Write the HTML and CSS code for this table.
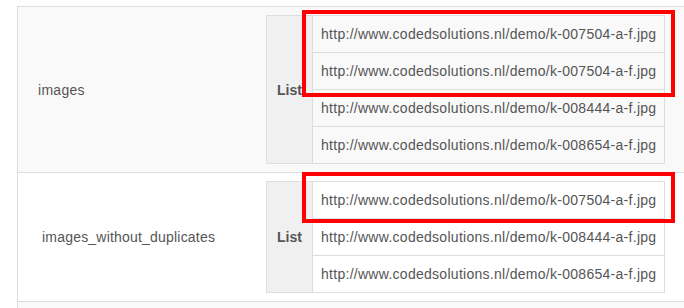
FILE: index.html
```html
<!DOCTYPE html>
<html>
<head>
<meta charset="utf-8">
<link rel="stylesheet" href="styles.css">
</head>
<body>
<div class="page">
  <div class="outer">
    <div class="row striped">
      <div class="key key-a">images</div>
      <div class="val">
        <table class="inner">
          <tr><th rowspan="4">List</th><td>http://www.codedsolutions.nl/demo/k-007504-a-f.jpg</td></tr>
          <tr><td>http://www.codedsolutions.nl/demo/k-007504-a-f.jpg</td></tr>
          <tr><td>http://www.codedsolutions.nl/demo/k-008444-a-f.jpg</td></tr>
          <tr><td>http://www.codedsolutions.nl/demo/k-008654-a-f.jpg</td></tr>
        </table>
      </div>
    </div>
    <div class="row plain">
      <div class="key key-b">images_without_duplicates</div>
      <div class="val">
        <table class="inner">
          <tr><th rowspan="3">List</th><td>http://www.codedsolutions.nl/demo/k-007504-a-f.jpg</td></tr>
          <tr><td>http://www.codedsolutions.nl/demo/k-008444-a-f.jpg</td></tr>
          <tr><td>http://www.codedsolutions.nl/demo/k-008654-a-f.jpg</td></tr>
        </table>
      </div>
    </div>
    <div class="row striped tail"></div>
  </div>
  <div class="mark mark-1"></div>
  <div class="mark mark-2"></div>
</div>
</body>
</html>
```
FILE: styles.css
```css
html, body {
  margin: 0;
  padding: 0;
  background: #fff;
  overflow: hidden;
}
body {
  font-family: "Liberation Sans", Arial, sans-serif;
  font-size: 14px;
  line-height: 20px;
  color: #555;
  letter-spacing: 0.28px;
}
.page {
  position: relative;
  padding: 6px 0 0 17px;
}
.outer {
  border-left: 1px solid #ddd;
}
.row {
  display: flex;
  align-items: center;
  border-top: 1px solid #ddd;
  padding: 8px 0;
}
.striped { background: #f9f9f9; }
.plain { background: #fff; }
.tail { height: 0; padding: 3px 0; }
.key {
  width: 248px;
  box-sizing: border-box;
  flex: none;
}
.key-a { padding-left: 20px; }
.key-b { padding-left: 24px; letter-spacing: 0.2px; }
.inner {
  border-collapse: collapse;
}
.inner th, .inner td {
  border: 1px solid #ddd;
  padding: 8px;
  height: 20px;
  white-space: nowrap;
}
.inner th {
  background: #f0f0f0;
  font-weight: bold;
  width: 27px;
  padding-left: 10px;
  padding-right: 8px;
  text-align: left;
  vertical-align: middle;
  letter-spacing: 0;
}
.mark {
  position: absolute;
  border: 4px solid #f00;
  box-sizing: border-box;
}
.mark-1 {
  left: 302px;
  top: 10px;
  width: 373px;
  height: 87px;
}
.mark-2 {
  left: 302px;
  top: 172px;
  width: 373px;
  height: 51px;
}
```
